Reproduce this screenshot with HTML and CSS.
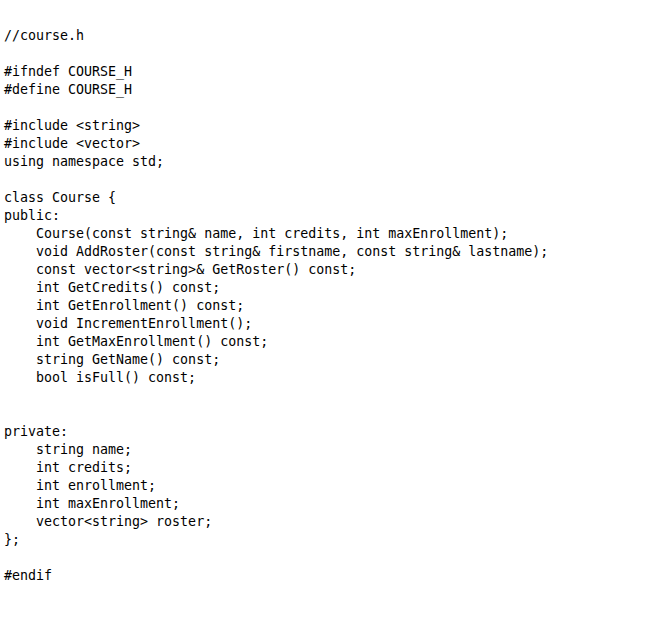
FILE: index.html
```html
<!DOCTYPE html>
<html>
<head>
<meta charset="utf-8">
<link rel="stylesheet" href="styles.css">
</head>
<body>
<pre class="code">//course.h

#ifndef COURSE_H
#define COURSE_H

#include &lt;string&gt;
#include &lt;vector&gt;
using namespace std;

class Course {
public:
    Course(const string&amp; name, int credits, int maxEnrollment);
    void AddRoster(const string&amp; firstname, const string&amp; lastname);
    const vector&lt;string&gt;&amp; GetRoster() const;
    int GetCredits() const;
    int GetEnrollment() const;
    void IncrementEnrollment();
    int GetMaxEnrollment() const;
    string GetName() const;
    bool isFull() const;


private:
    string name;
    int credits;
    int enrollment;
    int maxEnrollment;
    vector&lt;string&gt; roster;
};

#endif</pre>
</body>
</html>
```
FILE: styles.css
```css
html, body {
  margin: 0;
  padding: 0;
  background: #ffffff;
}
.code {
  margin: 0;
  padding: 27px 0 0 4px;
  font-family: "DejaVu Sans Mono", "Liberation Mono", monospace;
  font-size: 13.3px;
  line-height: 18px;
  color: #000000;
  white-space: pre;
}
```
